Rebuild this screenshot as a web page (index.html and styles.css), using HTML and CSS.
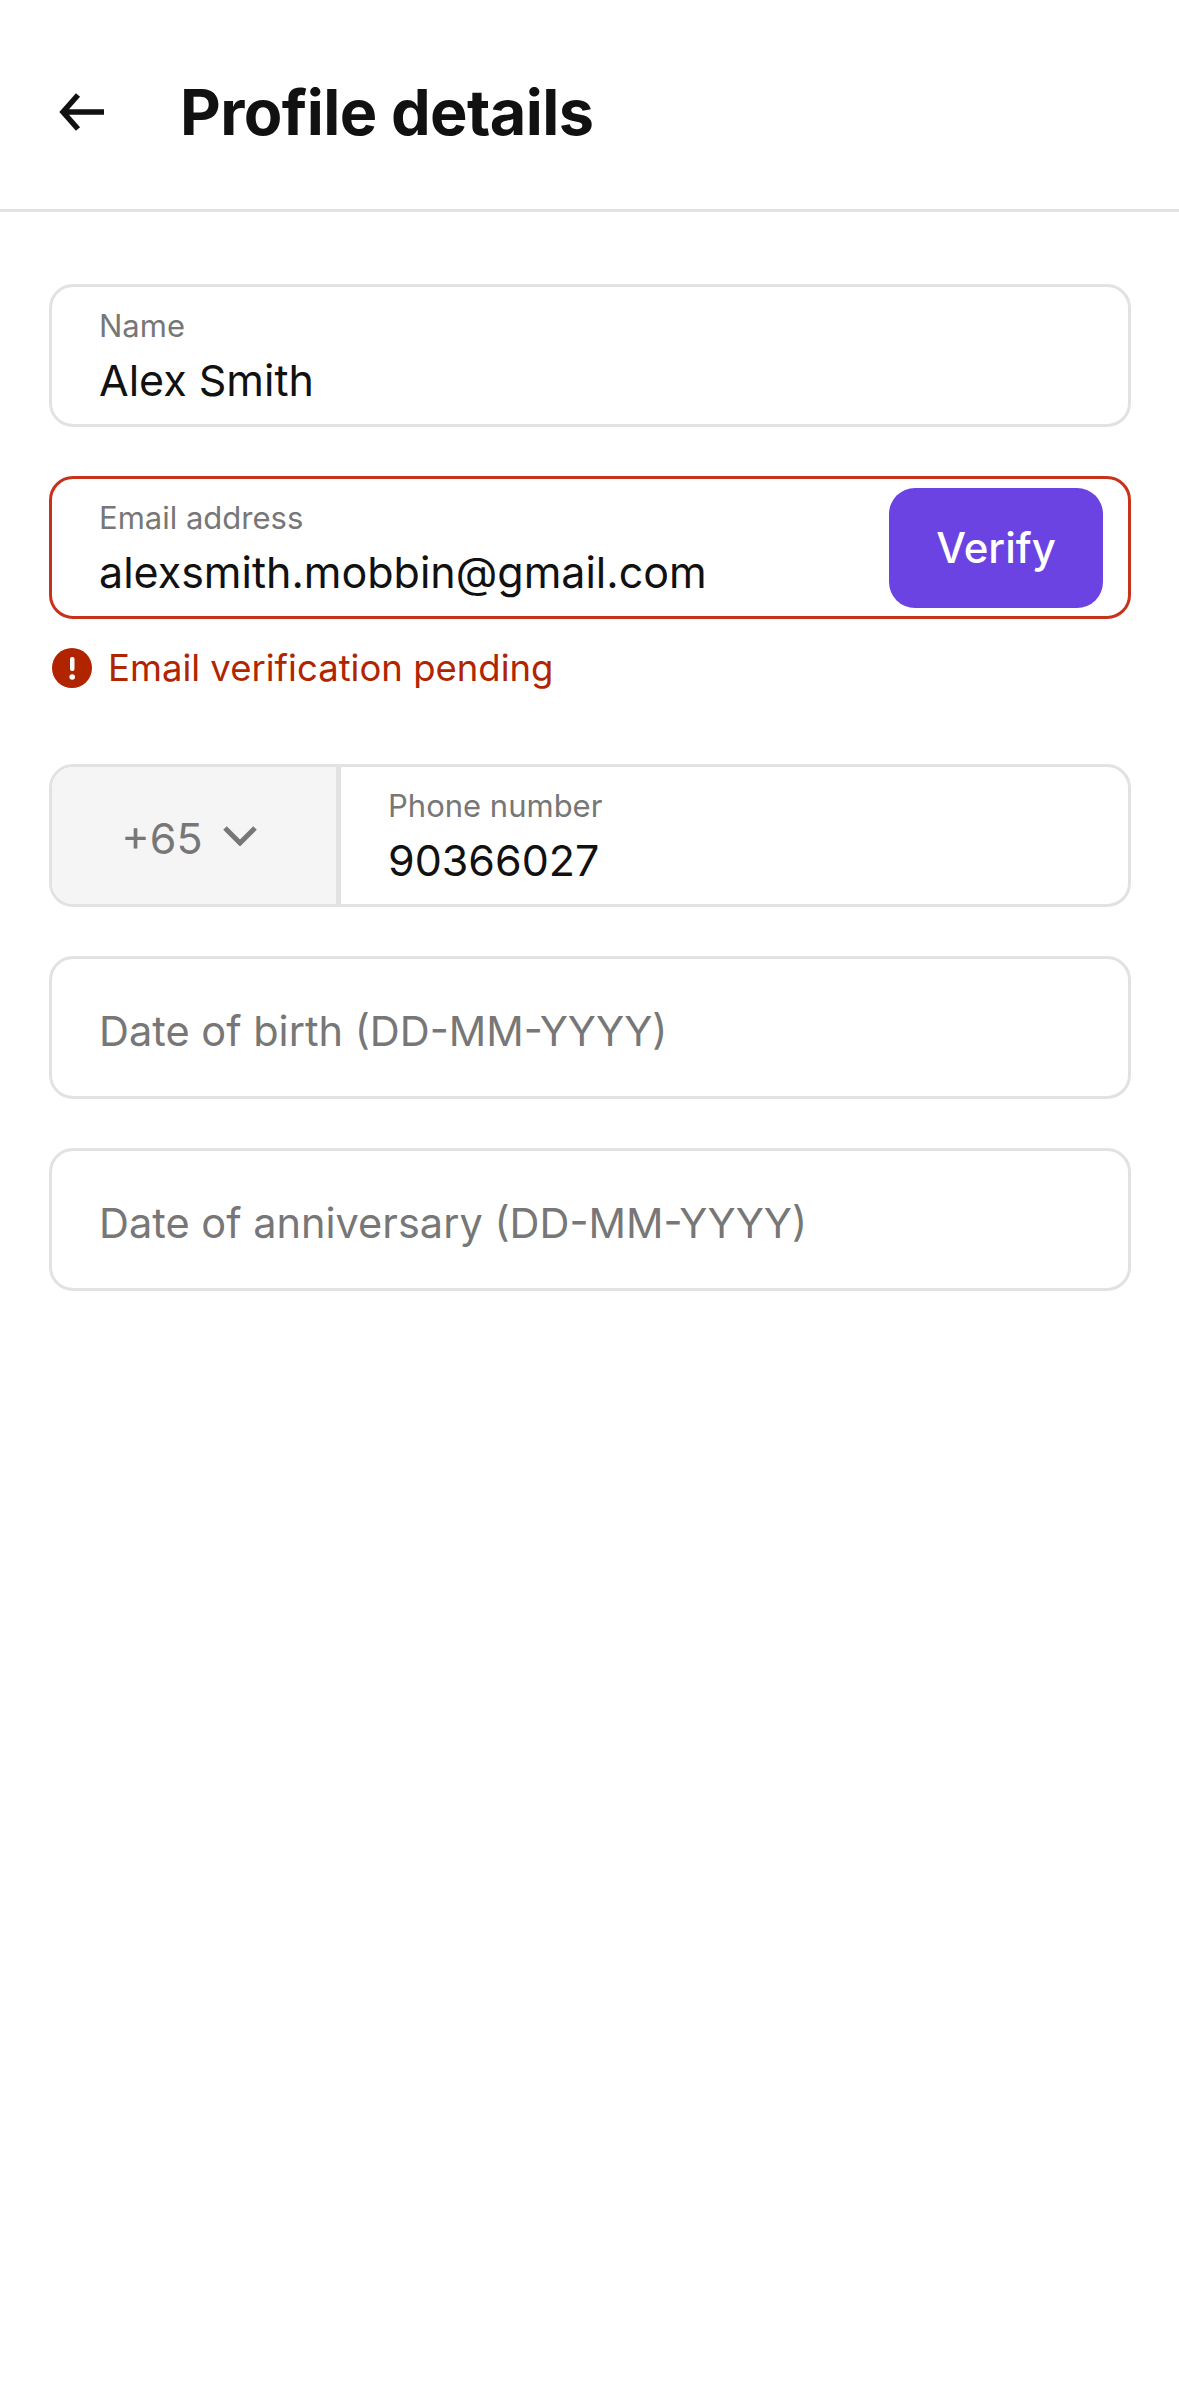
FILE: index.html
```html
<!DOCTYPE html>
<html lang="en">
<head>
    <meta charset="UTF-8">
    <meta name="viewport" content="width=device-width, initial-scale=1.0">
    <title>Profile details</title>
    <link rel="stylesheet" href="styles.css">
</head>
<body>
    <header class="topbar">
        <svg class="back-icon" viewBox="0 0 46 38" aria-hidden="true">
            <path d="M45 19H4M19 2L4 19l15 17" />
        </svg>
        <h1>Profile details</h1>
    </header>

    <main class="form">
        <div class="field">
            <div class="field-body">
                <span class="label">Name</span>
                <span class="value">Alex Smith</span>
            </div>
        </div>

        <div class="email-group">
            <div class="field field-error">
                <div class="field-body">
                    <span class="label">Email address</span>
                    <span class="value">alexsmith.mobbin@gmail.com</span>
                </div>
                <button class="verify">Verify</button>
            </div>
            <div class="error-row">
                <svg class="error-icon" viewBox="0 0 40 40" aria-hidden="true">
                    <circle cx="20" cy="20" r="20" />
                    <rect class="mark" x="18" y="9" width="4.5" height="14" rx="2" />
                    <circle class="mark" cx="20.2" cy="29" r="2.8" />
                </svg>
                <span>Email verification pending</span>
            </div>
        </div>

        <div class="field field-phone">
            <div class="country">
                <span>+65</span>
                <svg class="chevron" viewBox="0 0 34 20" aria-hidden="true">
                    <path d="M2 2l15 15L32 2" />
                </svg>
            </div>
            <div class="field-body">
                <span class="label">Phone number</span>
                <span class="value">90366027</span>
            </div>
        </div>

        <div class="field">
            <span class="placeholder">Date of birth (DD-MM-YYYY)</span>
        </div>

        <div class="field">
            <span class="placeholder">Date of anniversary (DD-MM-YYYY)</span>
        </div>
    </main>
</body>
</html>
```
FILE: styles.css
```css
* {
    box-sizing: border-box;
}
body {
    margin: 0;
    background: #fff;
    color: #111;
    font-family: Inter, "Noto Sans", sans-serif;
}
.topbar {
    display: flex;
    align-items: center;
    height: 212px;
    padding-top: 14px;
    padding-left: 59px;
    border-bottom: 3px solid #e2e2e2;
}
.back-icon {
    width: 46px;
    height: 38px;
    fill: none;
    stroke: #111;
    stroke-width: 5.5;
}
.topbar h1 {
    margin: 0 0 0 75px;
    font-size: 63px;
    font-weight: 700;
    letter-spacing: -0.6px;
}
.form {
    display: flex;
    flex-direction: column;
    gap: 49px;
    padding: 72px 48px 0 49px;
}
.field {
    display: flex;
    align-items: center;
    height: 143px;
    padding: 0 47px;
    border: 3px solid #e2e2e2;
    border-radius: 24px;
    overflow: hidden;
}
.field-body {
    display: flex;
    flex-direction: column;
    gap: 8px;
    flex: 1;
    padding-top: 4px;
}
.label {
    font-size: 31px;
    line-height: 36px;
    color: #777;
}
.value {
    font-size: 43px;
    line-height: 56px;
    color: #111;
}
.placeholder {
    padding-top: 6px;
    font-size: 41.5px;
    color: #777;
}
.email-group {
    display: flex;
    flex-direction: column;
    padding-bottom: 27px;
}
.field-error {
    padding-right: 25px;
    border-color: #c9321a;
}
.verify {
    width: 214px;
    height: 120px;
    border: 0;
    border-radius: 26px;
    background: #6c43e3;
    color: #fff;
    font-family: inherit;
    font-size: 42px;
    font-weight: 500;
}
.error-row {
    display: flex;
    align-items: center;
    gap: 16px;
    margin-top: 29px;
    padding-left: 3px;
    font-size: 36.5px;
    line-height: 40px;
    color: #b02500;
}
.error-icon {
    width: 40px;
    height: 40px;
    fill: #b02500;
}
.error-icon .mark {
    fill: #fff;
}
.field-phone {
    padding: 0;
}
.field-phone .field-body {
    padding-left: 47px;
}
.country {
    display: flex;
    align-items: center;
    justify-content: center;
    gap: 20px;
    width: 289px;
    height: 100%;
    padding-right: 10px;
    background: #f5f5f5;
    border-right: 5px solid #e2e2e2;
    font-size: 43px;
    color: #777;
}
.country span {
    padding-top: 4px;
}
.chevron {
    width: 34px;
    height: 20px;
    fill: none;
    stroke: #777;
    stroke-width: 5;
}
```
